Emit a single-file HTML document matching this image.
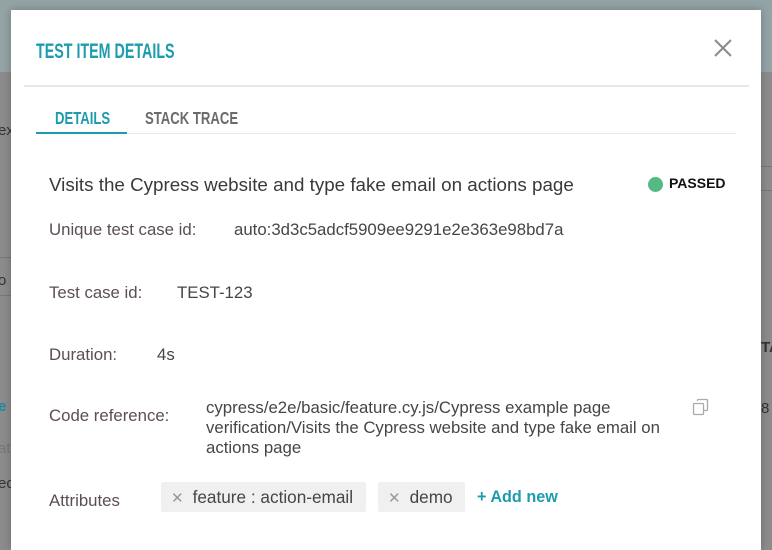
<!DOCTYPE html>
<html><head><meta charset="utf-8"><style>
*{margin:0;padding:0;box-sizing:border-box}
body{width:772px;height:536px;overflow:hidden;position:relative;background:#8c8c8c;font-family:"Liberation Sans",sans-serif}
.topbg{position:absolute;left:0;top:0;width:772px;height:72px;background:#93a3a6}
.bgtxt{position:absolute;color:#333;font-size:15px}
.modal{position:absolute;left:11px;top:10px;width:750px;height:540px;background:#fff;box-shadow:0 0 8px rgba(0,0,0,.25)}
.title{position:absolute;left:25px;top:30px;font-size:21px;font-weight:bold;color:#1e9cae;transform:scaleX(0.68);transform-origin:left;white-space:nowrap}
.close{position:absolute;left:702px;top:28px}
.sep{position:absolute;left:13px;top:75px;width:725px;height:2px;background:#e8e8e8}
.tabs{position:absolute;left:25px;top:123px;width:700px;height:1px;background:#e8e8e8}
.tab{position:absolute;top:98px;font-size:17.5px;font-weight:bold;transform:scaleX(0.75);transform-origin:left;white-space:nowrap}
.ul{position:absolute;left:25px;top:122px;width:91px;height:2px;background:#1e9cae}
.t{position:absolute;font-size:16.8px;color:#464547;white-space:nowrap}
.l{color:#5c4f4f}
.chip{position:absolute;top:472px;height:30px;background:#f0f0f0;border-radius:2px;font-size:17.2px;color:#464547;line-height:30px;padding-left:10px;white-space:nowrap}
.chip .x{color:#999;margin-right:9px;font-size:15px}
</style></head><body>
<div class="topbg"></div>
<div class="bgtxt" style="left:-2px;top:122px">ex</div>
<div class="bgtxt" style="left:-2px;top:272px">o</div>
<div class="bgtxt" style="left:-2px;top:398px;color:#1e8aa0;font-weight:bold">e</div>
<div class="bgtxt" style="left:-2px;top:440px;color:#777">at</div>
<div class="bgtxt" style="left:-2px;top:475px">ec</div>
<div style="position:absolute;left:0;top:257px;width:11px;height:1px;background:#777"></div>
<div style="position:absolute;left:0;top:295px;width:11px;height:1px;background:#777"></div>
<div style="position:absolute;left:761px;top:166px;width:11px;height:1px;background:#777"></div>
<div style="position:absolute;left:761px;top:190px;width:11px;height:1px;background:#777"></div>
<div class="bgtxt" style="left:761px;top:339px;font-weight:bold">TA</div>
<div class="bgtxt" style="left:761px;top:400px">8</div>
<div class="modal">
<div class="title">TEST ITEM DETAILS</div>
<svg class="close" width="20" height="20" viewBox="0 0 20 20"><path d="M2 2L18 18M18 2L2 18" stroke="#8a8a8a" stroke-width="2"/></svg>
<div class="sep"></div>
<div class="tabs"></div>
<div class="tab" style="left:44px;color:#1e9cae">DETAILS</div>
<div class="tab" style="left:134px;color:#6b6b6b">STACK TRACE</div>
<div class="ul"></div>
<div class="t" style="left:38px;top:164px;font-size:18.8px;color:#3a3a3a">Visits the Cypress website and type fake email on actions page</div>
<div style="position:absolute;left:637px;top:167px;width:15px;height:15px;border-radius:50%;background:#55b985"></div>
<div class="t" style="left:658px;top:165px;font-size:14px;color:#111;font-weight:bold">PASSED</div>
<div class="t l" style="left:38px;top:210px">Unique test case id:</div>
<div class="t" style="left:223px;top:210px">auto:3d3c5adcf5909ee9291e2e363e98bd7a</div>
<div class="t l" style="left:38px;top:273px">Test case id:</div>
<div class="t" style="left:166px;top:273px">TEST-123</div>
<div class="t l" style="left:38px;top:335px">Duration:</div>
<div class="t" style="left:146px;top:335px">4s</div>
<div class="t l" style="left:38px;top:396px">Code reference:</div>
<div class="t" style="left:195px;top:388px;line-height:20px">cypress/e2e/basic/feature.cy.js/Cypress example page<br>verification/Visits the Cypress website and type fake email on<br>actions page</div>
<svg style="position:absolute;left:681px;top:388px" width="18" height="18" viewBox="0 0 18 18"><rect x="1.5" y="5.5" width="10" height="11" rx="1" fill="#fff" stroke="#aaa" stroke-width="1.3"/><path d="M5.5 3V2.5a1 1 0 0 1 1-1h8a1 1 0 0 1 1 1v9a1 1 0 0 1-1 1H12" fill="none" stroke="#aaa" stroke-width="1.3"/></svg>
<div class="t l" style="left:38px;top:481px">Attributes</div>
<div class="chip" style="left:150px;width:205px"><span class="x">✕</span>feature : action-email</div>
<div class="chip" style="left:367px;width:87px"><span class="x">✕</span>demo</div>
<div class="t" style="left:466px;top:478px;color:#1e9cae;font-weight:bold;font-size:16.2px">+ Add new</div>
</div>
</body></html>
